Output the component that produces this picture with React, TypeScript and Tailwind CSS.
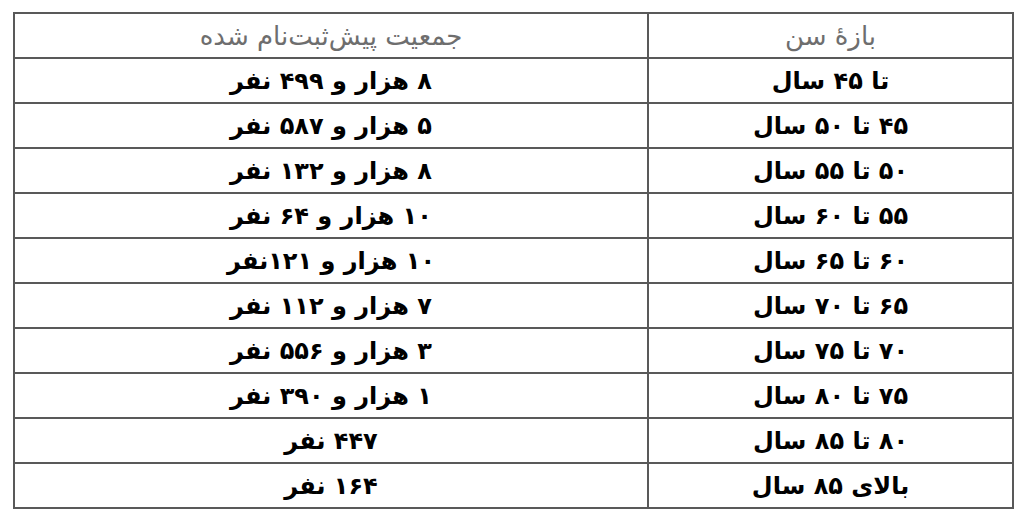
import React from "react";

const rows: [string, string][] = [
  ["تا ۴۵ سال", "۸ هزار و ۴۹۹ نفر"],
  ["۴۵ تا ۵۰ سال", "۵ هزار و ۵۸۷ نفر"],
  ["۵۰ تا ۵۵ سال", "۸ هزار و ۱۳۲ نفر"],
  ["۵۵ تا ۶۰ سال", "۱۰ هزار و ۶۴ نفر"],
  ["۶۰ تا ۶۵ سال", "۱۰ هزار و ۱۲۱نفر"],
  ["۶۵ تا ۷۰ سال", "۷ هزار و ۱۱۲ نفر"],
  ["۷۰ تا ۷۵ سال", "۳ هزار و ۵۵۶ نفر"],
  ["۷۵ تا ۸۰ سال", "۱ هزار و ۳۹۰ نفر"],
  ["۸۰ تا ۸۵ سال", "۴۴۷ نفر"],
  ["بالای ۸۵ سال", "۱۶۴ نفر"],
];

export default function App() {
  return (
    <div className="w-[1028px] h-[518px] bg-white pt-[12px] pl-[13px]">
      <table
        dir="rtl"
        className="w-[1001px] border-collapse leading-none"
        style={{ fontFamily: '"DejaVu Sans", "Noto Sans", sans-serif' }}
      >
        <thead>
          <tr className="h-[45px]">
            <th className="w-[365px] border-2 border-[#595959] text-[26px] font-normal text-[#6e6e6e] text-center align-middle">
              بازهٔ سن
            </th>
            <th className="border-2 border-[#595959] text-[26px] font-normal text-[#6e6e6e] text-center align-middle">
              جمعیت پیش‌ثبت‌نام شده
            </th>
          </tr>
        </thead>
        <tbody>
          {rows.map(([a, b], i) => (
            <tr key={i} className="h-[45px]">
              <td className="border-2 border-[#595959] text-[24px] font-bold text-black text-center align-middle">
                {a}
              </td>
              <td className="border-2 border-[#595959] text-[24px] font-bold text-black text-center align-middle">
                {b}
              </td>
            </tr>
          ))}
        </tbody>
      </table>
    </div>
  );
}
